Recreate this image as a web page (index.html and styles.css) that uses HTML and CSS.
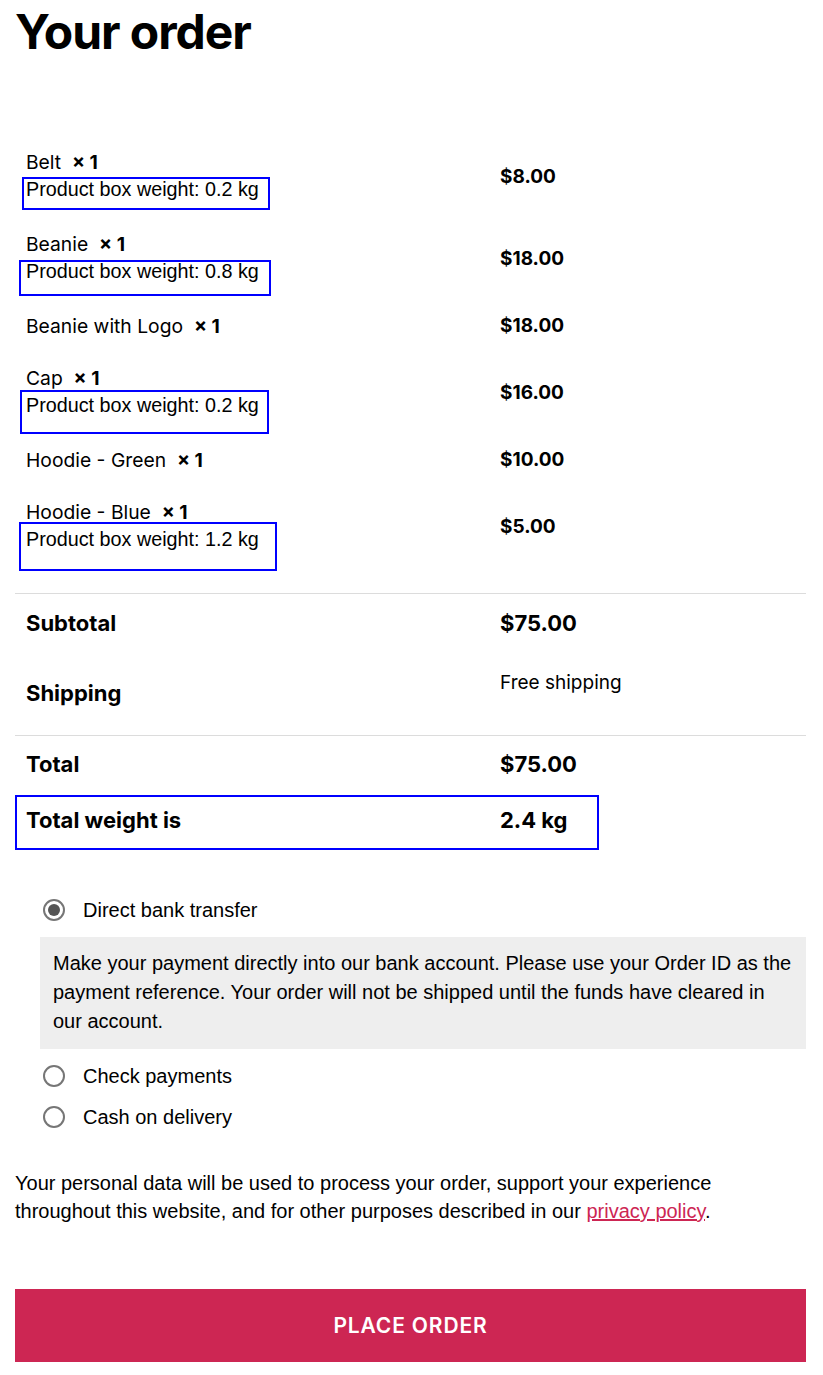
FILE: index.html
```html
<!DOCTYPE html>
<html lang="en">
<head>
<meta charset="utf-8">
<title>Your order</title>
<link rel="stylesheet" href="styles.css">
</head>
<body>
<main class="page">
  <h1 class="title">Your order</h1>

  <section class="order">
    <div class="row item">
      <div class="cell name-cell">
        <div class="name">Belt&nbsp; <strong>×&nbsp;1</strong></div>
        <div class="weight box-a">Product box weight:&nbsp;0.2 kg</div>
      </div>
      <div class="cell price">$8.00</div>
    </div>
    <div class="row item">
      <div class="cell name-cell">
        <div class="name">Beanie&nbsp; <strong>×&nbsp;1</strong></div>
        <div class="weight box-b">Product box weight:&nbsp;0.8 kg</div>
      </div>
      <div class="cell price">$18.00</div>
    </div>
    <div class="row item">
      <div class="cell name-cell">
        <div class="name">Beanie with Logo&nbsp; <strong>×&nbsp;1</strong></div>
      </div>
      <div class="cell price">$18.00</div>
    </div>
    <div class="row item">
      <div class="cell name-cell">
        <div class="name">Cap&nbsp; <strong>×&nbsp;1</strong></div>
        <div class="weight box-c">Product box weight:&nbsp;0.2 kg</div>
      </div>
      <div class="cell price">$16.00</div>
    </div>
    <div class="row item">
      <div class="cell name-cell">
        <div class="name">Hoodie - Green&nbsp; <strong>×&nbsp;1</strong></div>
      </div>
      <div class="cell price">$10.00</div>
    </div>
    <div class="row item">
      <div class="cell name-cell">
        <div class="name">Hoodie - Blue&nbsp; <strong>×&nbsp;1</strong></div>
        <div class="weight box-d">Product box weight: 1.2 kg</div>
      </div>
      <div class="cell price">$5.00</div>
    </div>

    <div class="totals">
      <div class="row sum">
        <div class="cell label">Subtotal</div>
        <div class="cell amount">$75.00</div>
      </div>
      <div class="row sum shipping">
        <div class="cell label">Shipping</div>
        <div class="cell ship-value">Free shipping</div>
      </div>
      <div class="row sum total">
        <div class="cell label">Total</div>
        <div class="cell amount">$75.00</div>
      </div>
      <div class="row sum total-weight">
        <div class="cell label">Total weight is</div>
        <div class="cell amount">2.4 kg</div>
      </div>
    </div>
  </section>

  <section class="payment">
    <ul class="methods">
      <li class="method">
        <span class="radio checked"></span>
        <span class="method-label">Direct bank transfer</span>
      </li>
      <li class="method-desc">
        Make your payment directly into our bank account. Please use your Order ID as the payment reference. Your order will not be shipped until the funds have cleared in our account.
      </li>
      <li class="method">
        <span class="radio"></span>
        <span class="method-label">Check payments</span>
      </li>
      <li class="method">
        <span class="radio"></span>
        <span class="method-label">Cash on delivery</span>
      </li>
    </ul>
  </section>

  <p class="privacy">Your personal data will be used to process your order, support your experience throughout this website, and for other purposes described in our <a href="#" class="link">privacy policy</a>.</p>

  <button class="place-order" type="button">PLACE ORDER</button>
</main>
</body>
</html>
```

FILE: styles.css
```css
* { box-sizing: border-box; }

html, body {
  margin: 0;
  padding: 0;
  background: #fff;
  color: #000;
}

.page {
  width: 791px;
  margin-left: 15px;
  font-family: "Liberation Sans", Arial, sans-serif;
}

.title {
  margin: 0;
  padding-top: 2px;
  font-family: Inter, "Noto Sans", sans-serif;
  font-weight: 700;
  font-size: 48px;
  line-height: 60px;
  letter-spacing: -0.022em;
  height: 136px;
}

.row {
  display: grid;
  grid-template-columns: 474px 1fr;
  position: relative;
}

.cell {
  padding-left: 11px;
}

.item {
  padding: 14px 0;
}

.name {
  font-family: Inter, "Noto Sans", sans-serif;
  font-size: 19.3px;
  line-height: 24px;
}

.name strong {
  font-weight: 700;
}

.weight {
  position: relative;
  font-family: "Liberation Sans", Arial, sans-serif;
  font-size: 19.75px;
  line-height: 30px;
}

.weight::after {
  content: "";
  position: absolute;
  border: 2px solid #0000ff;
  pointer-events: none;
}

.box-a::after { left: -4px; top: 3px; width: 244px; height: 29px; }
.box-b::after { left: -7px; top: 4px; width: 248px; height: 32px; }
.box-c::after { left: -6px; top: 0; width: 245px; height: 40px; }
.box-d::after { left: -7px; top: -2px; width: 254px; height: 45px; }

.price {
  align-self: center;
  font-family: Inter, "Noto Sans", sans-serif;
  font-weight: 700;
  font-size: 19px;
  line-height: 24px;
}

.totals {
  margin-top: 25px;
  border-top: 1px solid #dcdcdc;
}

.sum {
  font-family: Inter, "Noto Sans", sans-serif;
  align-items: center;
  height: 57px;
}

.label,
.amount {
  font-weight: 700;
  font-size: 22px;
  line-height: 26px;
}

.shipping {
  height: 85px;
  border-bottom: 1px solid #dcdcdc;
}

.total {
  height: 55px;
}

.ship-value {
  align-self: start;
  padding-top: 20px;
  font-size: 19px;
  line-height: 24px;
}

.total-weight::after {
  content: "";
  position: absolute;
  left: 0;
  top: 4px;
  width: 580px;
  height: 51px;
  border: 2px solid #0000ff;
}

.payment {
  margin-top: 48px;
}

.methods {
  list-style: none;
  margin: 0;
  padding: 0;
}

.method {
  display: flex;
  align-items: center;
  height: 28px;
  padding-left: 28px;
  gap: 18px;
  font-size: 20px;
  margin-bottom: 13px;
}

.radio {
  width: 22px;
  height: 22px;
  border: 2px solid #767676;
  border-radius: 50%;
  display: flex;
  align-items: center;
  justify-content: center;
  flex: none;
}

.radio.checked::before {
  content: "";
  width: 12px;
  height: 12px;
  border-radius: 50%;
  background: #555;
}

.method-desc {
  margin-left: 25px;
  margin-bottom: 13px;
  padding: 12px 13px 13px 13px;
  background: #eeeeee;
  font-size: 20px;
  line-height: 29px;
}

.privacy {
  margin: 38px 0 0;
  font-size: 20px;
  line-height: 28px;
}

.link {
  color: #cd2653;
  text-decoration: underline;
}

.place-order {
  display: block;
  width: 100%;
  height: 73px;
  margin-top: 64px;
  border: 0;
  background: #cd2653;
  color: #fff;
  font-family: Inter, "Noto Sans", sans-serif;
  font-weight: 600;
  font-size: 21px;
  letter-spacing: 0.04em;
  cursor: pointer;
}
```
